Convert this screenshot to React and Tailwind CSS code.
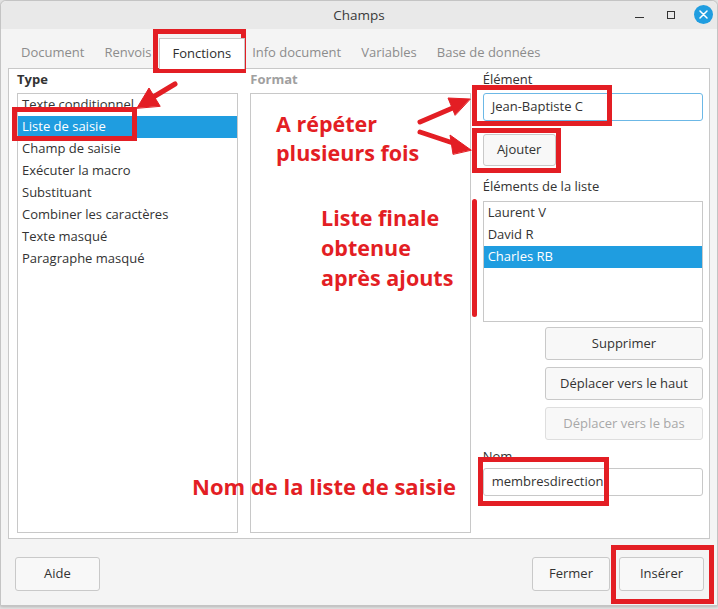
import React from "react";

const RED = "#e31e24";

function Btn({ children, className = "", disabled = false }) {
  return (
    <div
      className={
        "flex items-center justify-center rounded-[3px] border border-[#c9c9c9] bg-[#f8f8f8] text-[13px] " +
        (disabled ? "text-[#a8a8a8] border-[#dedede] bg-[#f6f6f6] " : "text-[#333] ") +
        className
      }
    >
      {children}
    </div>
  );
}

export default function App() {
  const types = [
    "Texte conditionnel",
    "Liste de saisie",
    "Champ de saisie",
    "Exécuter la macro",
    "Substituant",
    "Combiner les caractères",
    "Texte masqué",
    "Paragraphe masqué",
  ];
  const tabs = ["Document", "Renvois", "Fonctions", "Info document", "Variables", "Base de données"];
  return (
    <div
      className="relative w-[718px] h-[609px] overflow-hidden bg-[#e4e4e4]"
      style={{ fontFamily: '"Open Sans", "Noto Sans", sans-serif' }}
    >
      <div className="flex flex-col w-[718px] h-[606px] bg-[#f4f4f4] border border-[#c4c4c4] rounded-t-[6px] shadow-[0_1px_3px_rgba(0,0,0,0.2)]">
        {/* title bar */}
        <div className="relative flex items-center justify-center h-[28px] bg-[#e9e9e9] rounded-t-[6px]">
          <span className="text-[13.5px] text-[#3a3a3a]">Champs</span>
          <div className="absolute right-[4px] top-[4px] flex items-center gap-[14px]">
            <div className="w-[18px] h-[18px] flex items-center justify-center">
              <div className="w-[9px] h-[1.5px] bg-[#333] mt-[6px]" />
            </div>
            <div className="w-[18px] h-[18px] flex items-center justify-center">
              <div className="w-[8px] h-[8px] border-[1.5px] border-[#333]" />
            </div>
            <div className="w-[19px] h-[19px] rounded-full bg-[#1f9de0] flex items-center justify-center">
              <svg width="9" height="9" viewBox="0 0 9 9">
                <path d="M1 1L8 8M8 1L1 8" stroke="white" strokeWidth="1.5" strokeLinecap="round" />
              </svg>
            </div>
          </div>
        </div>

        {/* tabs */}
        <div className="flex items-end h-[39px] pl-[10px]">
          {tabs.map((t) =>
            t === "Fonctions" ? (
              <div
                key={t}
                className="relative z-10 -mx-[3px] px-[13px] h-[31px] mb-[-1px] flex items-center pb-[1px] bg-white border border-b-0 border-[#c8c8c8] text-[13px] text-[#2e2e2e]"
              >
                {t}
              </div>
            ) : (
              <div key={t} className="px-[10px] h-[30px] flex items-center pb-[1px] text-[13px] text-[#8c8c8c]">
                {t}
              </div>
            )
          )}
        </div>

        {/* panel */}
        <div className="mx-[7px] h-[471px] bg-white border border-[#c8c8c8] flex gap-[12px] pl-[8px] pr-[6px] pt-[1px] pb-[5px]">
          {/* Type column */}
          <div className="w-[222px] flex flex-col">
            <div className="h-[23px] pb-[4px] flex items-center text-[13px] font-bold text-[#333]">Type</div>
            <div className="flex-1 border border-[#c8c8c8] flex flex-col">
              {types.map((t, i) => (
                <div
                  key={t}
                  className={
                    "h-[22px] flex items-center pl-[4px] text-[13px] " +
                    (i === 1 ? "bg-[#1f9de0] text-white" : "text-[#333]")
                  }
                >
                  {t}
                </div>
              ))}
            </div>
          </div>

          {/* Format column */}
          <div className="w-[221px] flex flex-col">
            <div className="h-[23px] pb-[4px] flex items-center text-[13px] font-bold text-[#a0a0a0]">Format</div>
            <div className="flex-1 border border-[#c8c8c8]" />
          </div>

          {/* Right column */}
          <div className="w-[221px] flex flex-col">
            <div className="h-[23px] pb-[4px] flex items-center text-[13px] text-[#333]">Élément</div>
            <div className="h-[28px] border border-[#6cb8e6] rounded-[3px] flex items-center pl-[8px] text-[13px] text-[#333]">
              Jean-Baptiste C
            </div>
            <Btn className="mt-[13px] w-[73px] h-[32px]">Ajouter</Btn>
            <div className="mt-[10px] h-[22px] flex items-center text-[13px] text-[#333]">Éléments de la liste</div>
            <div className="mt-[3px] h-[121px] border border-[#c8c8c8] flex flex-col">
              {["Laurent V", "David R", "Charles RB"].map((t, i) => (
                <div
                  key={t}
                  className={
                    "h-[22px] flex items-center pl-[4px] text-[13px] " +
                    (i === 2 ? "bg-[#1f9de0] text-white" : "text-[#333]")
                  }
                >
                  {t}
                </div>
              ))}
            </div>
            <div className="mt-[5px] flex flex-col items-end gap-[7px]">
              <Btn className="w-[158px] h-[33px]">Supprimer</Btn>
              <Btn className="w-[158px] h-[33px]">Déplacer vers le haut</Btn>
              <Btn className="w-[158px] h-[33px]" disabled>
                Déplacer vers le bas
              </Btn>
            </div>
            <div className="mt-[6px] h-[22px] flex items-center text-[13px] text-[#333]">Nom</div>
            <div className="h-[28px] border border-[#c8c8c8] rounded-[3px] flex items-center pl-[8px] text-[13px] text-[#333]">
              membresdirection
            </div>
          </div>
        </div>

        {/* bottom buttons */}
        <div className="flex items-center justify-between pl-[14px] pr-[13px] mt-[18px]">
          <Btn className="w-[85px] h-[34px]">Aide</Btn>
          <div className="flex gap-[9px]">
            <Btn className="w-[78px] h-[34px]">Fermer</Btn>
            <Btn className="w-[85px] h-[34px]">Insérer</Btn>
          </div>
        </div>
      </div>

      {/* ===== red annotations (overlay) ===== */}
      <div className="absolute left-[153px] top-[29px] w-[93px] h-[44px] border-[5px] border-[#e31e24]" />
      <div className="absolute left-[12px] top-[107px] w-[125px] h-[34px] border-[5px] border-[#e31e24]" />
      <div className="absolute left-[472px] top-[85px] w-[140px] h-[41px] border-[5px] border-[#e31e24]" />
      <div className="absolute left-[472px] top-[128px] w-[89px] h-[45px] border-[5px] border-[#e31e24]" />
      <div className="absolute left-[478px] top-[457px] w-[131px] h-[49px] border-[5px] border-[#e31e24]" />
      <div className="absolute left-[611px] top-[545px] w-[103px] h-[59px] border-[5px] border-[#e31e24]" />
      <div className="absolute left-[472px] top-[199px] w-[5px] h-[118px] rounded-full bg-[#e31e24]" />

      <svg className="absolute left-0 top-0" width="718" height="609" viewBox="0 0 718 609">
        <g stroke={RED} strokeWidth="5" strokeLinecap="round" fill={RED}>
          <line x1="175" y1="84" x2="150" y2="99" />
          <polygon points="137,108 149,88 160,106" strokeWidth="1" strokeLinejoin="round" />
          <line x1="420" y1="122" x2="455" y2="107" />
          <polygon points="470,99 448,98 455,115" strokeWidth="1" strokeLinejoin="round" />
          <line x1="420" y1="132" x2="456" y2="144" />
          <polygon points="471,150 450,135 453,154" strokeWidth="1" strokeLinejoin="round" />
        </g>
      </svg>

      <div className="absolute left-[276px] top-[109px] text-[21.5px] leading-[29px] font-bold text-[#e31e24]">
        A répéter
        <br />
        plusieurs fois
      </div>
      <div className="absolute left-[321px] top-[203px] text-[21.5px] leading-[30px] font-bold text-[#e31e24]">
        Liste finale
        <br />
        obtenue
        <br />
        après ajouts
      </div>
      <div className="absolute left-[192px] top-[471px] text-[22px] leading-[30px] font-bold text-[#e31e24]">
        Nom de la liste de saisie
      </div>
    </div>
  );
}
